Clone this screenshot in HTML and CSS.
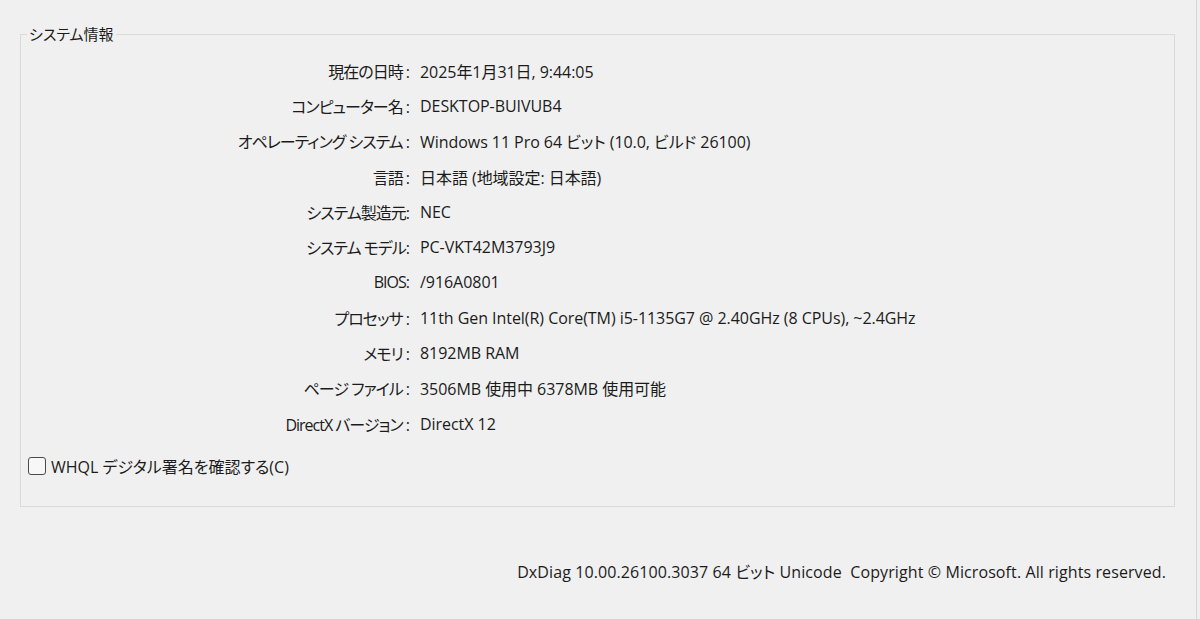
FILE: index.html
```html
<!DOCTYPE html>
<html lang="ja">
<head>
<meta charset="utf-8">
<title>DirectX 診断ツール</title>
<link rel="stylesheet" href="styles.css">
</head>
<body>
<div class="window">
  <div class="group">
    <div class="legend">システム情報</div>
    <div class="rows">
      <div class="label">現在の日時 :</div><div class="value">2025年1月31日, 9:44:05</div>
      <div class="label">コンピューター名 :</div><div class="value">DESKTOP-BUIVUB4</div>
      <div class="label">オペレーティング システム :</div><div class="value">Windows 11 Pro 64 ビット (10.0, ビルド 26100)</div>
      <div class="label">言語 :</div><div class="value">日本語 (地域設定: 日本語)</div>
      <div class="label">システム製造元:</div><div class="value">NEC</div>
      <div class="label">システム モデル:</div><div class="value">PC-VKT42M3793J9</div>
      <div class="label">BIOS:</div><div class="value">/916A0801</div>
      <div class="label">プロセッサ :</div><div class="value">11th Gen Intel(R) Core(TM) i5-1135G7 @ 2.40GHz (8 CPUs), ~2.4GHz</div>
      <div class="label">メモリ :</div><div class="value">8192MB RAM</div>
      <div class="label">ページ ファイル :</div><div class="value">3506MB 使用中 6378MB 使用可能</div>
      <div class="label">DirectX バージョン :</div><div class="value">DirectX 12</div>
    </div>
    <label class="check"><span class="box"></span><span>WHQL デジタル署名を確認する(C)</span></label>
  </div>
  <div class="footer">DxDiag 10.00.26100.3037 64 ビット Unicode&nbsp; Copyright © Microsoft. All rights reserved.</div>
</div>
</body>
</html>
```
FILE: styles.css
```css
html, body {
  margin: 0;
  padding: 0;
  background: #f0f0f0;
}
body {
  font-family: "Open Sans", "Noto Sans CJK JP", sans-serif;
  font-feature-settings: "palt";
  color: #1b1b1b;
  font-size: 16px;
}
.window {
  width: 1197px;
  height: 619px;
  box-sizing: border-box;
  border-right: 1px solid #d6d6d6;
  padding: 34px 0 0 20px;
  overflow: hidden;
}
.group {
  width: 1155px;
  height: 473px;
  box-sizing: border-box;
  border: 1px solid #dadada;
}
.legend {
  display: block;
  width: fit-content;
  margin: -11px 0 0 6px;
  padding: 0 2px;
  height: 20px;
  line-height: 20px;
  background: #f0f0f0;
  font-size: 15px;
}
.rows {
  display: grid;
  grid-template-columns: 388px auto;
  column-gap: 11px;
  grid-auto-rows: 35.3px;
  align-items: center;
  margin-top: 9px;
}
.label {
  justify-self: end;
  white-space: nowrap;
  letter-spacing: -1px;
}
.value {
  white-space: nowrap;
  letter-spacing: -0.05px;
}
.check {
  display: flex;
  align-items: center;
  gap: 5px;
  margin: 15px 0 0 7px;
  height: 20px;
}
.box {
  width: 16px;
  height: 16px;
  border: 1px solid #4a4a4a;
  border-radius: 3px;
  background: #f7f7f7;
}
.footer {
  margin-top: 55px;
  padding-right: 30px;
  height: 20px;
  line-height: 20px;
  text-align: right;
  white-space: nowrap;
  letter-spacing: 0.1px;
}
```
